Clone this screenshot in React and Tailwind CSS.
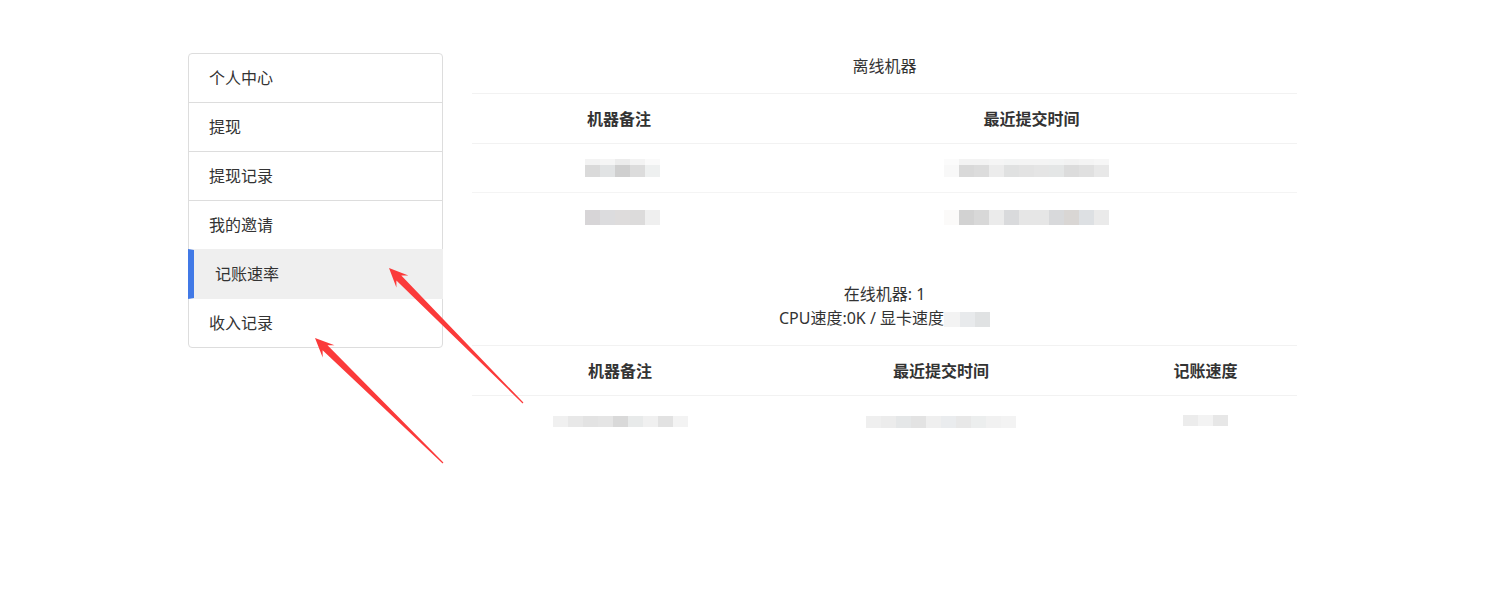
import React from "react";

const menu = ["个人中心", "提现", "提现记录", "我的邀请", "记账速率", "收入记录"];
const activeIndex = 4;

// pixelated placeholders for the data that was blurred out in the screenshot
function Blocks({ colors, h }) {
  return (
    <div className={`flex ${h}`}>
      {colors.map((c, i) => (
        <div key={i} className={`w-[15px] ${c}`} />
      ))}
    </div>
  );
}

function arrowPoints(s, t) {
  const dx = t[0] - s[0];
  const dy = t[1] - s[1];
  const len = Math.hypot(dx, dy);
  const u = [dx / len, dy / len];
  const n = [-u[1], u[0]];
  const at = (back, side) => [
    t[0] - u[0] * back + n[0] * side,
    t[1] - u[1] * back + n[1] * side,
  ];
  const pts = [
    t,
    at(19, 8.5),
    at(14, 3.5),
    [s[0] + n[0] * 0.6, s[1] + n[1] * 0.6],
    [s[0] - n[0] * 0.6, s[1] - n[1] * 0.6],
    at(14, -3.5),
    at(19, -8.5),
  ];
  return pts.map((p) => p.map((v) => v.toFixed(1)).join(",")).join(" ");
}

function Sidebar() {
  return (
    <div className="flex w-[255px] flex-col">
      {menu.map((label, i) => {
        const active = i === activeIndex;
        const first = i === 0;
        const last = i === menu.length - 1;
        return (
          <div
            key={label}
            className={[
              "flex h-[50px] items-center border text-[16px] text-[#333333]",
              last ? "rounded-b-[4px]" : "-mb-px",
              first ? "rounded-t-[4px]" : "",
              active
                ? "relative z-10 border-[#efefef] border-l-[6px] border-l-[#4179e6] bg-[#efefef] pl-[21px]"
                : "border-[#dddddd] bg-white pl-5",
            ].join(" ")}
          >
            {label}
          </div>
        );
      })}
    </div>
  );
}

function OfflineTable() {
  return (
    <div className="mt-[15px] border-t border-[#f2f2f2]">
      <div className="flex h-[50px] items-center border-b border-[#f2f2f2] text-[16px] font-bold text-[#333333]">
        <div className="w-[294px] text-center">机器备注</div>
        <div className="flex-1 text-center">最近提交时间</div>
      </div>
      <div className="flex h-[49px] items-center border-b border-[#f4f4f4]">
        <div className="flex w-[294px] justify-center pl-[6px]">
          <div className="flex h-[18px] flex-col">
            <Blocks h="h-[6px]" colors={["bg-[#f3f3f3]", "bg-[#f5f5f5]", "bg-[#ececec]", "bg-[#f3f3f3]", "bg-[#fafafa]"]} />
            <Blocks h="h-[12px]" colors={["bg-[#dadada]", "bg-[#e1e3e4]", "bg-[#cfcfcf]", "bg-[#dcdcdc]", "bg-[#eef0f0]"]} />
          </div>
        </div>
        <div className="flex flex-1 justify-center pr-[10px]">
          <div className="flex h-[18px] flex-col">
            <Blocks h="h-[6px]" colors={["bg-[#fbfbfb]", "bg-[#f3f3f3]", "bg-[#f3f3f3]", "bg-[#f5f5f5]", "bg-[#f3f4f4]", "bg-[#f4f4f4]", "bg-[#f4f4f4]", "bg-[#f3f4f4]", "bg-[#f2f2f2]", "bg-[#f4f4f4]", "bg-[#f6f6f6]"]} />
            <Blocks h="h-[12px]" colors={["bg-[#f8f8f8]", "bg-[#d9d9d9]", "bg-[#dcdcdc]", "bg-[#ececec]", "bg-[#e0e1e1]", "bg-[#e3e3e3]", "bg-[#e5e5e5]", "bg-[#e4e6e6]", "bg-[#dcdcdc]", "bg-[#e0e0e0]", "bg-[#e8e8e8]"]} />
          </div>
        </div>
      </div>
      <div className="flex h-[49px] items-center">
        <div className="flex w-[294px] justify-center pl-[6px]">
          <Blocks h="h-[15px]" colors={["bg-[#d7d5d7]", "bg-[#dcdcde]", "bg-[#dedcdc]", "bg-[#dcdbdb]", "bg-[#efefef]"]} />
        </div>
        <div className="flex flex-1 justify-center pr-[10px]">
          <Blocks h="h-[15px]" colors={["bg-[#fbfaf9]", "bg-[#d2d2d2]", "bg-[#d8d8d8]", "bg-[#ebebeb]", "bg-[#d9dadc]", "bg-[#e6e6e6]", "bg-[#e6e6e6]", "bg-[#d8d9db]", "bg-[#d9d6d4]", "bg-[#dde0e3]", "bg-[#eaeaea]"]} />
        </div>
      </div>
    </div>
  );
}

function OnlineTable() {
  return (
    <div className="mt-[15px] h-[83px] overflow-hidden border-t border-[#f2f2f2]">
      <div className="flex h-[50px] items-center border-b border-[#f2f2f2] text-[16px] font-bold text-[#333333]">
        <div className="w-[296px] text-center">机器备注</div>
        <div className="w-[346px] text-center">最近提交时间</div>
        <div className="flex-1 text-center">记账速度</div>
      </div>
      <div className="flex h-[49px] items-center">
        <div className="flex w-[296px] justify-center pt-[2px]">
          <Blocks h="h-[11px]" colors={["bg-[#f0f0f0]", "bg-[#e8e8e8]", "bg-[#e3e3e3]", "bg-[#e5e5e5]", "bg-[#d9d9d9]", "bg-[#e8eaea]", "bg-[#f0f0f0]", "bg-[#e2e2e2]", "bg-[#f3f3f3]"]} />
        </div>
        <div className="flex w-[346px] justify-center pt-[2px]">
          <Blocks h="h-[12px]" colors={["bg-[#efefef]", "bg-[#ececec]", "bg-[#e5e7e8]", "bg-[#e3e3e3]", "bg-[#efefef]", "bg-[#eaecee]", "bg-[#e8e8e8]", "bg-[#eceeee]", "bg-[#f1f1f1]", "bg-[#f3f3f3]"]} />
        </div>
        <div className="flex flex-1 justify-center">
          <Blocks h="h-[11px]" colors={["bg-[#ececec]", "bg-[#f3f3f3]", "bg-[#e7e7e7]"]} />
        </div>
      </div>
    </div>
  );
}

export default function App() {
  return (
    <div
      className="relative h-[593px] w-[1506px] overflow-hidden bg-white"
      style={{ fontFamily: '"Noto Sans", "Noto Sans CJK SC", sans-serif' }}
    >
      <div className="flex gap-[30px] pl-[188px] pt-[53px]">
        <Sidebar />
        <div className="-ml-px flex w-[825px] flex-col pt-px text-[16px] text-[#333333]">
          <div className="h-6 text-center leading-6">离线机器</div>
          <OfflineTable />
          <div className="mt-10 text-center leading-6">
            <div>在线机器: 1</div>
            <div className="flex items-center justify-center">
              <span>CPU速度:0K / 显卡速度</span>
              <span className="mt-[3px] flex h-[15px]">
                <span className="w-[16px] bg-[#f3f3f3]" />
                <span className="w-[15px] bg-[#e8eaec]" />
                <span className="w-[15px] bg-[#e0e2e3]" />
              </span>
            </div>
          </div>
          <OnlineTable />
        </div>
      </div>

      <svg
        className="pointer-events-none absolute inset-0 z-20"
        width="1506"
        height="593"
        viewBox="0 0 1506 593"
      >
        <polygon points={arrowPoints([523, 403], [389, 268])} fill="#fb3a3a" />
        <polygon points={arrowPoints([443, 463], [315, 338])} fill="#fb3a3a" />
      </svg>
    </div>
  );
}
